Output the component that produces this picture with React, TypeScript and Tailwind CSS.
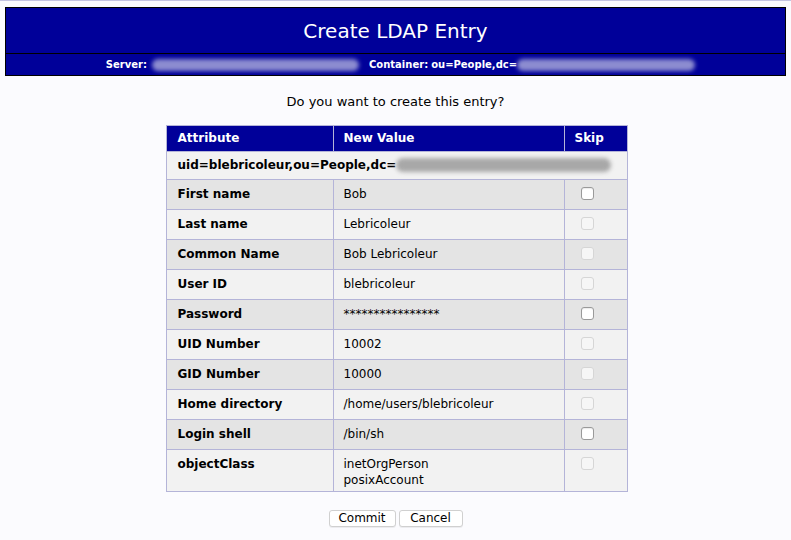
import React from "react";

type Row = {
  label: string;
  values: string[];
  enabled: boolean;
};

const rows: Row[] = [
  { label: "First name", values: ["Bob"], enabled: true },
  { label: "Last name", values: ["Lebricoleur"], enabled: false },
  { label: "Common Name", values: ["Bob Lebricoleur"], enabled: false },
  { label: "User ID", values: ["blebricoleur"], enabled: false },
  { label: "Password", values: ["****************"], enabled: true },
  { label: "UID Number", values: ["10002"], enabled: false },
  { label: "GID Number", values: ["10000"], enabled: false },
  { label: "Home directory", values: ["/home/users/blebricoleur"], enabled: false },
  { label: "Login shell", values: ["/bin/sh"], enabled: true },
  { label: "objectClass", values: ["inetOrgPerson", "posixAccount"], enabled: false },
];

const Blur: React.FC<{ className: string }> = ({ className }) => (
  <span className={`inline-block rounded-full blur-[2px] ${className}`} />
);

const Checkbox: React.FC<{ enabled: boolean }> = ({ enabled }) => (
  <span
    className={
      enabled
        ? "block h-[13px] w-[13px] rounded-[3px] border border-[#9a9a9a] bg-white shadow-[inset_0_1px_1px_rgba(0,0,0,0.08)]"
        : "block h-[13px] w-[13px] rounded-[3px] border border-[#d6d6d6] bg-[#f6f6f6]"
    }
  />
);

export default function App() {
  return (
    <div className="min-h-[540px] bg-[#fbfbfe] font-['DejaVu_Sans',Verdana,sans-serif] text-black">
      <div className="h-px bg-[#c4c4e2]" />

      <div className="mx-[5px] mt-[6px] border border-black bg-[#000099] text-white">
        <div className="flex h-[46px] items-center justify-center border-b border-black pt-[1px] text-[20px] leading-none">
          Create LDAP Entry
        </div>
        <div className="flex h-[21px] items-center justify-center gap-[10px] pl-[10px] text-[10px]">
          <div className="flex items-center">
            <span className="font-semibold">Server:</span>
            <Blur className="ml-[5px] h-[12px] w-[207px] bg-[#8c8cd0]" />
          </div>
          <div className="flex items-center">
            <span className="font-semibold">Container:</span>
            <span className="ml-[3px] font-bold">ou=People,dc=</span>
            <Blur className="h-[12px] w-[178px] bg-[#8c8cd0]" />
          </div>
        </div>
      </div>

      <p className="mt-[16px] text-center text-[13px]">Do you want to create this entry?</p>

      <div className="mt-[13px] flex justify-center pl-[2px]">
        <table className="w-[461px] table-fixed border-collapse text-[12px]">
          <colgroup>
            <col className="w-[167px]" />
            <col className="w-[231px]" />
            <col className="w-[63px]" />
          </colgroup>
          <thead>
            <tr className="h-[26px] bg-[#000099] text-left font-bold text-white">
              <th className="border border-[#b4b4d8] pl-[11px]">Attribute</th>
              <th className="border border-[#b4b4d8] pl-[10px]">New Value</th>
              <th className="border border-[#b4b4d8] pl-[10px]">Skip</th>
            </tr>
          </thead>
          <tbody>
            <tr className="h-[28px] bg-[#f2f2f2]">
              <td colSpan={3} className="border border-[#b4b4d8] pl-[11px] font-bold">
                <div className="flex items-center">
                  <span>uid=blebricoleur,ou=People,dc=</span>
                  <Blur className="h-[14px] w-[215px] bg-[#a8a8a8]" />
                </div>
              </td>
            </tr>
            {rows.map((row, i) => (
              <tr
                key={row.label}
                className={`${i % 2 === 0 ? "bg-[#e4e4e4]" : "bg-[#f2f2f2]"} ${
                  row.values.length > 1 ? "h-[42px]" : "h-[30px]"
                }`}
              >
                <td className="border border-[#b4b4d8] pl-[11px] align-top pt-[6px] leading-[16px] font-bold">
                  {row.label}
                </td>
                <td className="border border-[#b4b4d8] pl-[10px] align-top pt-[6px]">
                  {row.values.map((v) => (
                    <div key={v} className="leading-[16px]">
                      {v}
                    </div>
                  ))}
                </td>
                <td className="border border-[#b4b4d8] align-top pl-[16px] pt-[7px]">
                  <Checkbox enabled={row.enabled} />
                </td>
              </tr>
            ))}
          </tbody>
        </table>
      </div>

      <div className="mt-[18px] flex justify-center gap-[3px] text-[12px]">
        <button className="h-[17px] w-[67px] rounded-[3px] border border-[#d0d0d0] bg-white leading-none shadow-[0_1px_0_rgba(0,0,0,0.06)]">
          Commit
        </button>
        <button className="h-[17px] w-[64px] rounded-[3px] border border-[#d0d0d0] bg-white leading-none shadow-[0_1px_0_rgba(0,0,0,0.06)]">
          Cancel
        </button>
      </div>
    </div>
  );
}
